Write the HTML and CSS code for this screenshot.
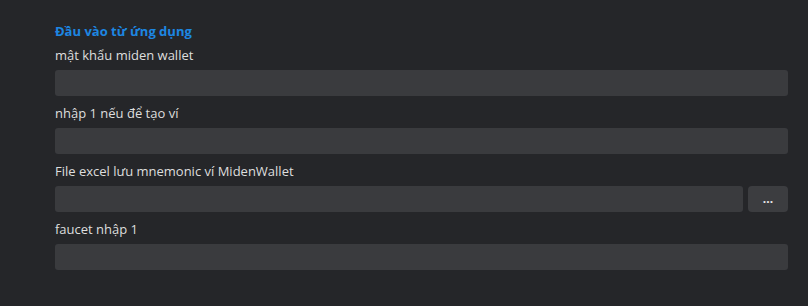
FILE: index.html
```html
<!DOCTYPE html>
<html lang="vi">
<head>
  <meta charset="UTF-8" />
  <title>Đầu vào từ ứng dụng</title>
  <link rel="stylesheet" href="styles.css">
</head>
<body>
  <div class="panel">
    <h2 class="section-title">Đầu vào từ ứng dụng</h2>

    <div class="field">
      <label for="password">mật khẩu miden wallet</label>
      <input type="text" id="password" />
    </div>

    <div class="field">
      <label for="create-wallet">nhập 1 nếu để tạo ví</label>
      <input type="text" id="create-wallet" />
    </div>

    <div class="field">
      <label for="excel-file">File excel lưu mnemonic ví MidenWallet</label>
      <div class="file-row">
        <input type="text" id="excel-file" />
        <button class="browse-btn" type="button">...</button>
      </div>
    </div>

    <div class="field">
      <label for="faucet">faucet nhập 1</label>
      <input type="text" id="faucet" />
    </div>
  </div>
</body>
</html>
```

FILE: styles.css
```css
html, body {
  height: 100%;
}
body {
  margin: 0;
  background-color: #252629;
  font-family: 'Open Sans', 'Noto Sans', sans-serif;
  color: #dedede;
}
.panel {
  padding: 21px 20px 0 55px;
}
.section-title {
  margin: 0 0 4px;
  font-size: 13px;
  line-height: 20px;
  font-weight: bold;
  color: #1d86e2;
}
.field {
  display: flex;
  flex-direction: column;
  margin-bottom: 7px;
}
label {
  display: block;
  font-size: 13px;
  line-height: 20px;
  margin-bottom: 5px;
}
input {
  height: 26px;
  box-sizing: border-box;
  background-color: #3a3b3e;
  border: none;
  border-radius: 3px;
  color: #dedede;
  padding: 0 8px;
  outline: none;
}
.file-row {
  display: flex;
  gap: 5px;
}
.file-row input {
  flex: 1;
}
.browse-btn {
  width: 40px;
  height: 26px;
  padding: 0 0 4px;
  background-color: #3c3d40;
  border: none;
  border-radius: 4px;
  color: #e8e8e8;
  font-family: inherit;
  font-size: 12px;
  font-weight: bold;
  line-height: 26px;
  cursor: pointer;
}
```
